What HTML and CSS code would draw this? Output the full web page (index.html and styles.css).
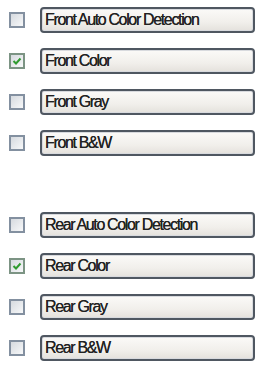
FILE: index.html
```html
<!DOCTYPE html>
<html lang="en">
<head>
    <meta charset="UTF-8">
    <title>Scan Options</title>
    <link rel="stylesheet" href="styles.css">
</head>
<body>

<div class="options">
    <div class="option-row">
        <span class="check"></span>
        <button class="option-btn">Front Auto Color Detection</button>
    </div>
    <div class="option-row">
        <span class="check checked">
            <svg viewBox="0 0 10 10" width="10" height="10"><path d="M1.5 5 L4 7.5 L8.5 2.5" fill="none" stroke="#2f9b2f" stroke-width="2"/></svg>
        </span>
        <button class="option-btn">Front Color</button>
    </div>
    <div class="option-row">
        <span class="check"></span>
        <button class="option-btn">Front Gray</button>
    </div>
    <div class="option-row">
        <span class="check"></span>
        <button class="option-btn">Front B&amp;W</button>
    </div>

    <div class="spacer"></div>

    <div class="option-row">
        <span class="check"></span>
        <button class="option-btn">Rear Auto Color Detection</button>
    </div>
    <div class="option-row">
        <span class="check checked">
            <svg viewBox="0 0 10 10" width="10" height="10"><path d="M1.5 5 L4 7.5 L8.5 2.5" fill="none" stroke="#2f9b2f" stroke-width="2"/></svg>
        </span>
        <button class="option-btn">Rear Color</button>
    </div>
    <div class="option-row">
        <span class="check"></span>
        <button class="option-btn">Rear Gray</button>
    </div>
    <div class="option-row">
        <span class="check"></span>
        <button class="option-btn">Rear B&amp;W</button>
    </div>
</div>

</body>
</html>
```

FILE: styles.css
```css
body {
    margin: 0;
    background-color: #ffffff;
    font-family: 'Liberation Sans', Arial, sans-serif;
}

.options {
    display: flex;
    flex-direction: column;
    padding: 7px 4px 0 9px;
}

/* one checkbox + button per row */
.option-row {
    display: flex;
    align-items: center;
    height: 26px;
    margin-bottom: 15px;
}

.spacer {
    height: 41px;
}

.check {
    width: 12px;
    height: 12px;
    border: 2px solid #8390a0;
    background: linear-gradient(135deg, #d6dadf, #f7f8f9);
    display: flex;
    align-items: center;
    justify-content: center;
    flex-shrink: 0;
}
.check.checked {
    border-color: #7c9484;
}

.option-btn {
    margin-left: 15px;
    width: 215px;
    height: 26px;
    border: 2px solid #4f5761;
    border-radius: 4px;
    background: linear-gradient(#fbfaf8, #f1efeb 60%, #e4e1dc);
    box-shadow: inset 0 0 0 1px #d8dade;
    font-family: 'Liberation Sans', Arial, sans-serif;
    font-size: 16px;
    letter-spacing: -1.35px;
    color: #222222;
    text-shadow: 0 0 0.6px #333333;
    text-align: left;
    padding: 0 0 0 3px;
    line-height: 22px;
}
```
